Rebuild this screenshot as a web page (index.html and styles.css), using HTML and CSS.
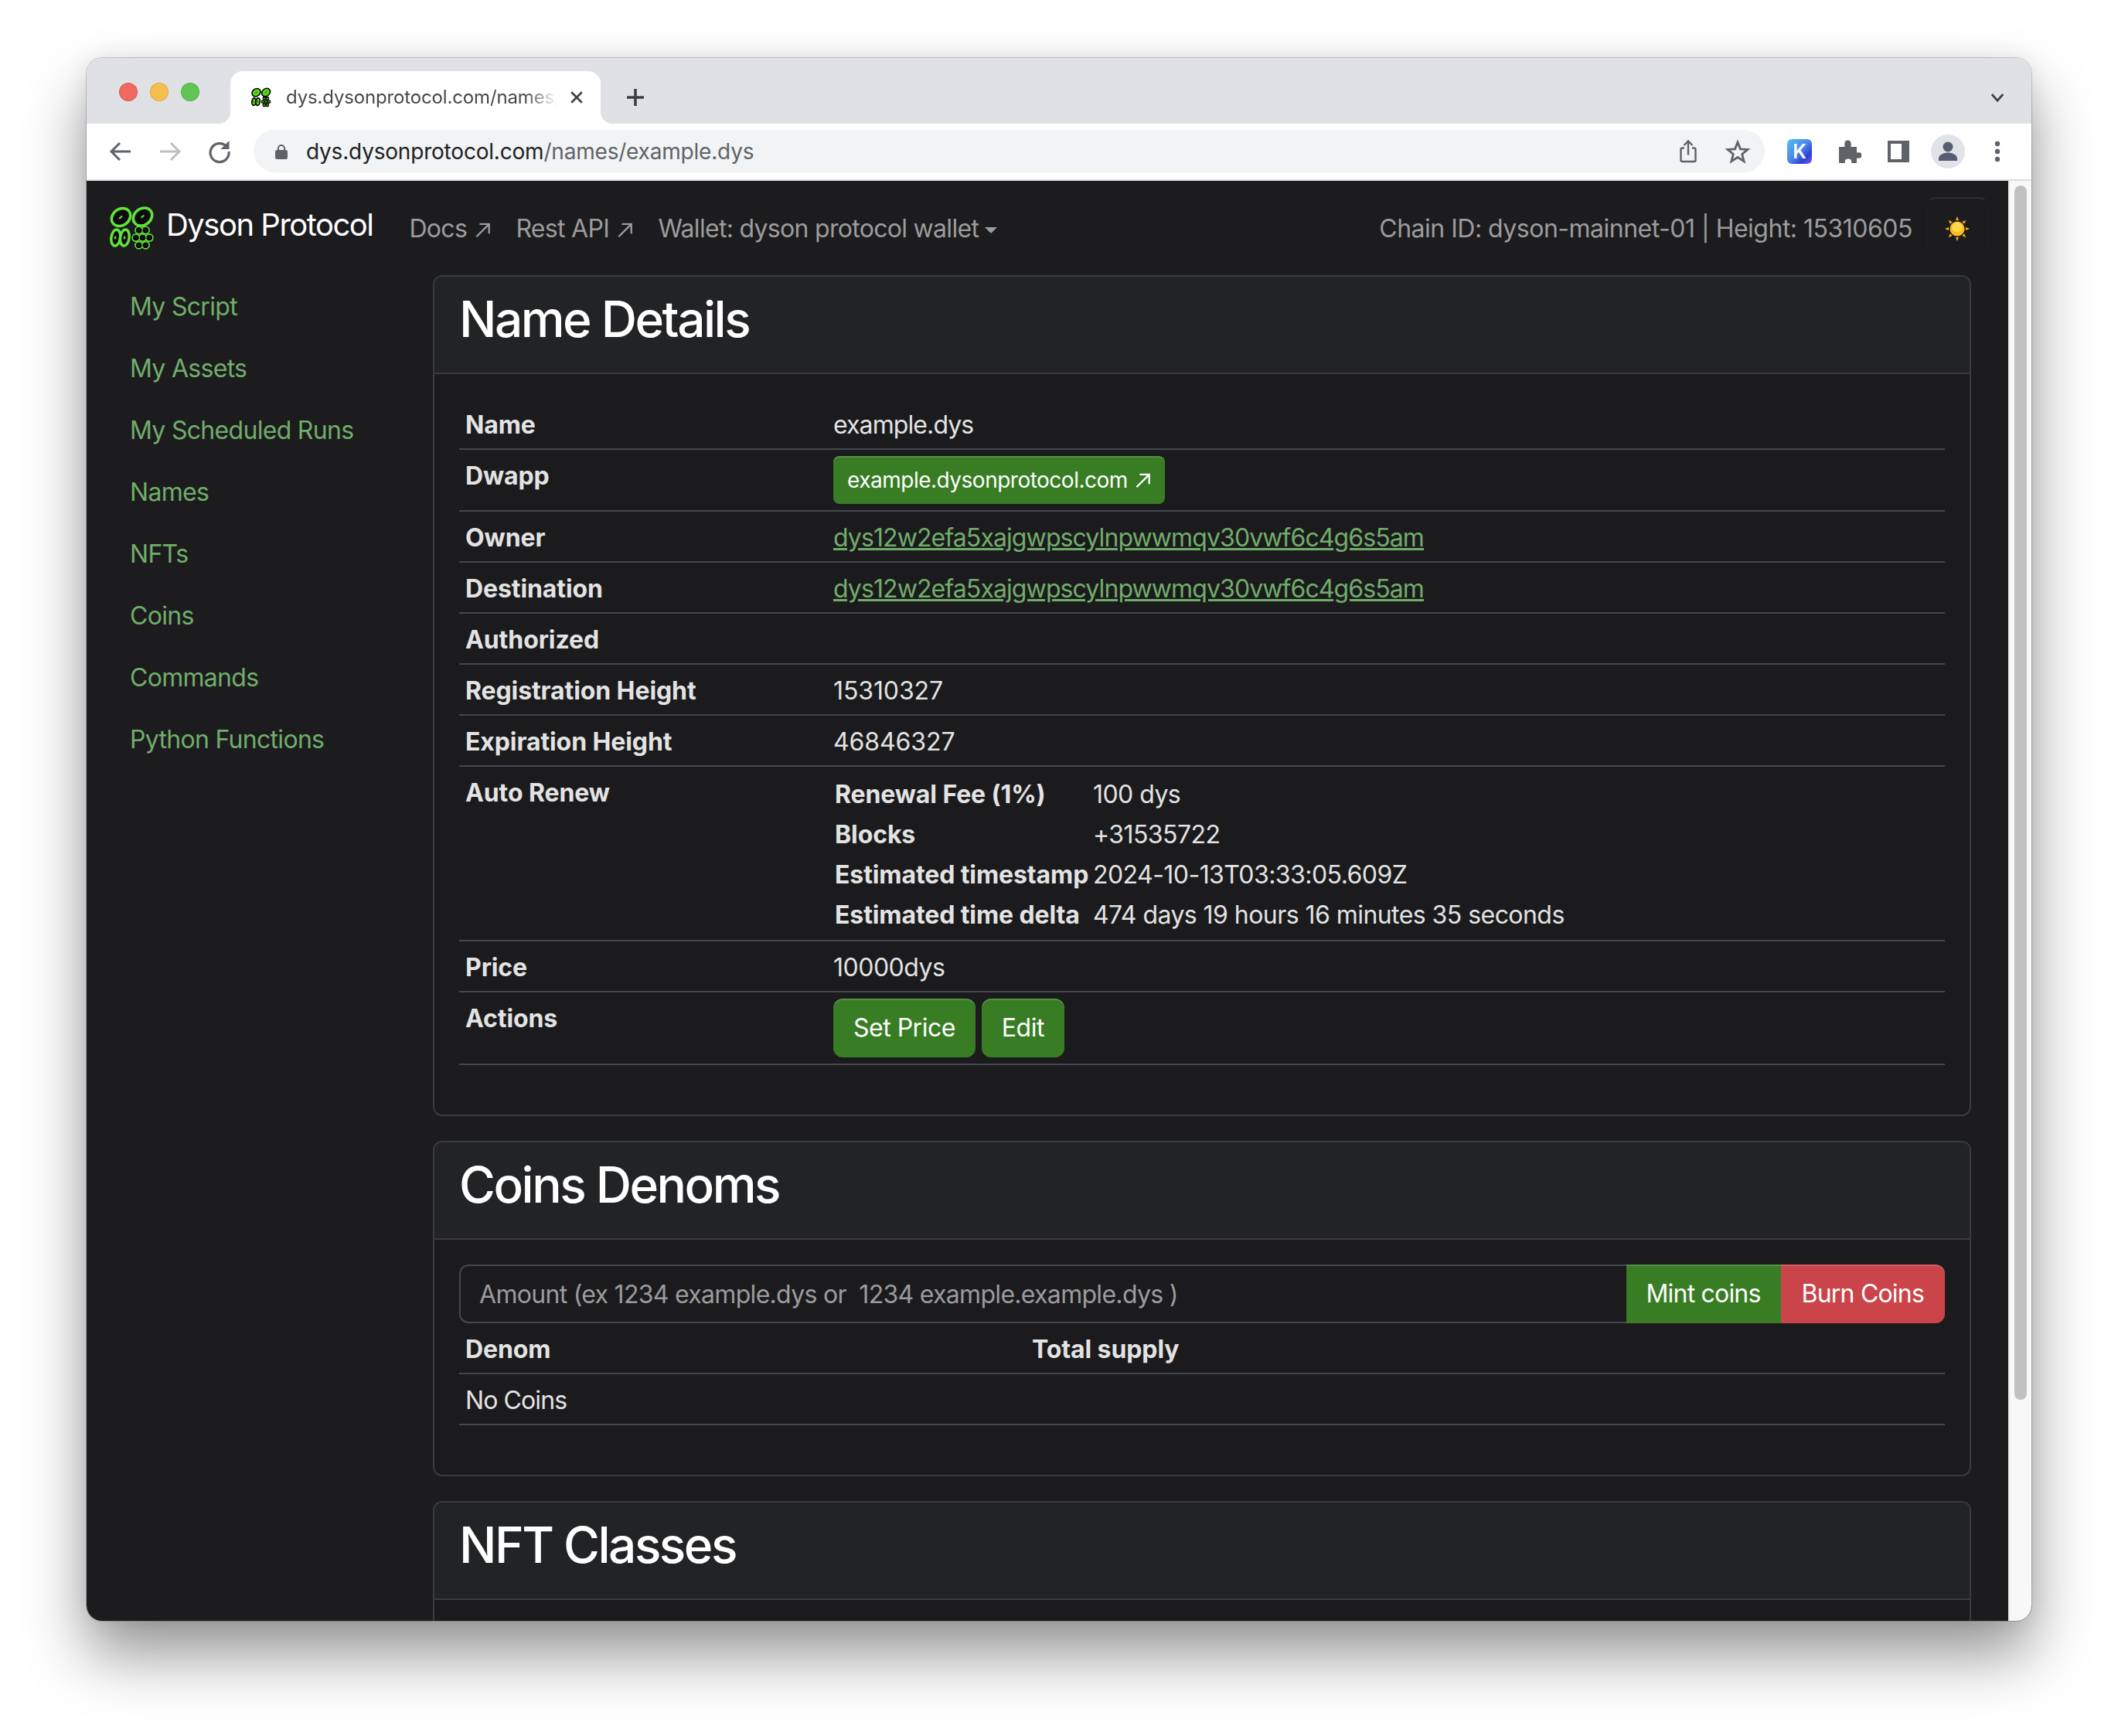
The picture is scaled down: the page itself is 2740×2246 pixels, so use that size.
FILE: index.html

```html
<!DOCTYPE html>
<html lang="en">
<head>
    <meta charset="UTF-8">
    <title>Dyson Protocol</title>
    <link rel="stylesheet" href="styles.css">
</head>
<body>
    <svg class="defs" width="0" height="0">
        <symbol id="logo" viewBox="0 0 60 58">
            <g class="logo-big">
                <ellipse cx="15" cy="14.5" rx="13.5" ry="11" transform="rotate(-38 15 14.5)"/>
                <ellipse cx="44" cy="14" rx="13.5" ry="11" transform="rotate(-38 44 14)"/>
                <ellipse cx="8" cy="42" rx="6" ry="11" transform="rotate(8 8 42)"/>
                <ellipse cx="20" cy="42" rx="6" ry="11" transform="rotate(8 20 42)"/>
            </g>
            <g class="logo-dash">
                <path d="M12.5 16.5l4-3.500"/>
                <path d="M42 15l4-3"/>
                <path d="M7.500 40l-.5 4"/>
                <path d="M20 40l-.5 4"/>
            </g>
            <g class="logo-halo">
                <circle cx="39" cy="32" r="4"/><circle cx="48" cy="32" r="4"/>
                <circle cx="35" cy="42" r="4"/><circle cx="44" cy="42" r="4"/><circle cx="53" cy="42" r="4"/>
                <circle cx="39" cy="52" r="4"/><circle cx="48" cy="52" r="4"/>
            </g>
            <g class="logo-cell">
                <circle cx="39" cy="32" r="3.200"/><circle cx="48" cy="32" r="3.200"/>
                <circle cx="35" cy="42" r="3.200"/><circle cx="44" cy="42" r="3.200"/><circle cx="53" cy="42" r="3.200"/>
                <circle cx="39" cy="52" r="3.200"/><circle cx="48" cy="52" r="3.200"/>
            </g>
        </symbol>
        <symbol id="ext" viewBox="0 0 18 18">
            <path d="M2 16.500L15 3.500M5.500 2.500H16V13" fill="none" stroke="currentColor" stroke-width="2"/>
        </symbol>
    </svg>

    <div class="window">
        <div class="tabstrip">
            <div class="lights">
                <span class="light red"></span>
                <span class="light yellow"></span>
                <span class="light green"></span>
            </div>
            <div class="tab">
                <svg class="favicon"><use href="#logo"/></svg>
                <span class="tab-title">dys.dysonprotocol.com/names/</span>
                <svg class="tab-close" viewBox="0 0 16 16"><path d="M2 2l12 12M14 2L2 14"/></svg>
            </div>
            <svg class="new-tab" viewBox="0 0 24 24"><path d="M12 1v22M1 12h22"/></svg>
            <svg class="tab-list" viewBox="0 0 20 14"><path d="M2 2l8 9 8-9"/></svg>
        </div>

        <div class="toolbar">
            <svg class="tool-icon stroke" viewBox="0 0 32 32"><path d="M29 16H5M15 5L4 16l11 11"/></svg>
            <svg class="tool-icon stroke off" viewBox="0 0 32 32"><path d="M3 16h24M17 5l11 11-11 11"/></svg>
            <svg class="tool-icon" viewBox="0 0 32 32">
                <path d="M25 9.500A12 12 0 1 0 28 16" fill="none" stroke="#5f6368" stroke-width="3.200"/>
                <path d="M28.500 2v11h-11z" fill="#5f6368"/>
            </svg>
            <div class="omnibox">
                <svg class="lock" viewBox="0 0 16 20">
                    <path d="M4 9V6a4 4 0 0 1 8 0v3" fill="none" stroke="#5f6368" stroke-width="2"/>
                    <rect x="0" y="8" width="16" height="12" rx="2.500" fill="#5f6368"/>
                </svg>
                <div class="url">dys.dysonprotocol.com<span class="url-path">/names/example.dys</span></div>
                <svg class="tool-icon" viewBox="0 0 32 32">
                    <path d="M11 11.500H8.500a2 2 0 0 0-2 2V27a2 2 0 0 0 2 2h15a2 2 0 0 0 2-2V13.500a2 2 0 0 0-2-2H21M16 20.500V3M10.500 8l5.500-5.500L21.500 8" fill="none" stroke="#5f6368" stroke-width="2.400"/>
                </svg>
                <svg class="tool-icon" viewBox="0 0 32 32">
                    <path d="M16 4l3.500 8.800 9.500.6-7.300 6 2.400 9.200-8.100-5.100-8.100 5.100 2.400-9.200-7.300-6 9.500-.6z" fill="none" stroke="#5f6368" stroke-width="2.800" stroke-linejoin="miter"/>
                </svg>
            </div>
            <div class="tool-group">
                <div class="ext-k">K</div>
                <svg class="tool-icon" viewBox="0 0 32 32">
                    <path d="M3 10h7.500C9.500 3 12 1.500 14.500 1.500S19.500 3 18.500 10H26v7.500c6-1 6.500 1.500 6.500 3.500s-.5 4.500-6.500 3.500V30a1 1 0 0 1-1 1H19c1-4-1-5.500-4-5.500S10 27 11 31H4a1 1 0 0 1-1-1z" fill="#5f6368"/>
                </svg>
                <svg class="tool-icon" viewBox="0 0 32 32">
                    <path d="M2 2h28v28H2zM6 6v20h14V6z" fill="#5f6368" fill-rule="evenodd"/>
                </svg>
                <div class="avatar">
                    <svg viewBox="0 0 44 44">
                        <circle cx="22" cy="16" r="6.500" fill="#565e70"/>
                        <path d="M10 34v-3c0-5 7-7.500 12-7.500S34 26 34 31v3z" fill="#565e70"/>
                    </svg>
                </div>
                <svg class="tool-icon" viewBox="0 0 32 32">
                    <circle cx="16" cy="6" r="3.200" fill="#5f6368"/>
                    <circle cx="16" cy="16" r="3.200" fill="#5f6368"/>
                    <circle cx="16" cy="26" r="3.200" fill="#5f6368"/>
                </svg>
            </div>
        </div>

        <div class="page">
            <div class="viewport">
                <nav class="navbar">
                    <a class="brand">
                        <svg class="brand-logo"><use href="#logo"/></svg>
                        <span class="brand-name">Dyson Protocol</span>
                    </a>
                    <div class="nav-links">
                        <a class="nav-link">Docs <svg class="ext-icon"><use href="#ext"/></svg></a>
                        <a class="nav-link">Rest API <svg class="ext-icon"><use href="#ext"/></svg></a>
                        <a class="nav-link">Wallet: dyson protocol wallet<span class="caret"></span></a>
                    </div>
                    <div class="chain">Chain ID: dyson-mainnet-01 | Height: 15310605</div>
                    <div class="theme-btn">
                        <svg viewBox="0 0 32 32">
                            <g fill="#f6b01e">
                                <path d="M16 0l2 5h-4zM16 32l-2-5h4zM0 16l5-2v4zM32 16l-5 2v-4z"/>
                                <path d="M4.700 4.700l5 2.200-2.800 2.800zM27.300 27.300l-5-2.200 2.800-2.800zM27.300 4.700l-2.200 5-2.800-2.800zM4.700 27.300l2.200-5 2.800 2.800z"/>
                            </g>
                            <circle cx="16" cy="16" r="9.500" fill="#fbbb1c"/>
                            <circle cx="16" cy="14" r="6.500" fill="#ffd84a"/>
                        </svg>
                    </div>
                </nav>

                <div class="content">
                    <ul class="sidebar">
                        <li><a>My Script</a></li>
                        <li><a>My Assets</a></li>
                        <li><a>My Scheduled Runs</a></li>
                        <li><a>Names</a></li>
                        <li><a>NFTs</a></li>
                        <li><a>Coins</a></li>
                        <li><a>Commands</a></li>
                        <li><a>Python Functions</a></li>
                    </ul>

                    <main class="main">
                        <section class="card">
                            <header class="card-header"><h2>Name Details</h2></header>
                            <div class="card-body">
                                <table class="table details">
                                    <tr><th>Name</th><td>example.dys</td></tr>
                                    <tr><th>Dwapp</th><td class="btn-cell"><a class="btn btn-sm">example.dysonprotocol.com <svg class="ext-icon"><use href="#ext"/></svg></a></td></tr>
                                    <tr><th>Owner</th><td><a class="addr">dys12w2efa5xajgwpscylnpwwmqv30vwf6c4g6s5am</a></td></tr>
                                    <tr><th>Destination</th><td><a class="addr">dys12w2efa5xajgwpscylnpwwmqv30vwf6c4g6s5am</a></td></tr>
                                    <tr><th>Authorized</th><td></td></tr>
                                    <tr><th>Registration Height</th><td class="num">15310327</td></tr>
                                    <tr><th>Expiration Height</th><td class="num">46846327</td></tr>
                                    <tr>
                                        <th>Auto Renew</th>
                                        <td>
                                            <table class="renew">
                                                <tr><th>Renewal Fee (1%)</th><td>100 dys</td></tr>
                                                <tr><th>Blocks</th><td>+31535722</td></tr>
                                                <tr><th>Estimated timestamp</th><td>2024-10-13T03:33:05.609Z</td></tr>
                                                <tr><th>Estimated time delta</th><td>474 days 19 hours 16 minutes 35 seconds</td></tr>
                                            </table>
                                        </td>
                                    </tr>
                                    <tr><th>Price</th><td class="amount">10000dys</td></tr>
                                    <tr>
                                        <th>Actions</th>
                                        <td class="btn-cell"><div class="actions"><a class="btn">Set Price</a><a class="btn">Edit</a></div></td>
                                    </tr>
                                </table>
                            </div>
                        </section>

                        <section class="card">
                            <header class="card-header"><h2>Coins Denoms</h2></header>
                            <div class="card-body">
                                <div class="input-group">
                                    <input type="text" placeholder="Amount (ex 1234 example.dys or  1234 example.example.dys )">
                                    <a class="btn btn-flat">Mint coins</a>
                                    <a class="btn btn-flat btn-danger">Burn Coins</a>
                                </div>
                                <table class="table coins">
                                    <tr><th>Denom</th><th>Total supply</th></tr>
                                    <tr><td>No Coins</td><td></td></tr>
                                </table>
                            </div>
                        </section>

                        <section class="card card-last">
                            <header class="card-header"><h2>NFT Classes</h2></header>
                            <div class="card-body"></div>
                        </section>
                    </main>
                </div>
            </div>
            <div class="scrollbar"><div class="thumb"></div></div>
        </div>
    </div>
</body>
</html>
```

FILE: styles.css

```css
* {
    box-sizing: border-box;
}
html, body {
    height: 100%;
}
body {
    margin: 0;
    padding: 75px 112px 0;
    background: #fff;
    font-family: Inter, "Liberation Sans", sans-serif;
    font-size: 32px;
    line-height: 48px;
    letter-spacing: -0.9px;
    overflow: hidden;
}
.defs {
    position: absolute;
}
.window {
    height: 2022px;
    border-radius: 20px;
    overflow: hidden;
    display: flex;
    flex-direction: column;
    box-shadow: 0 0 0 1px rgba(0,0,0,0.18), 0 44px 80px rgba(0,0,0,0.42), 0 0 30px rgba(0,0,0,0.08);
}

/* browser chrome */
.tabstrip {
    flex: none;
    height: 85px;
    background: #dfe1e5;
    display: flex;
    align-items: flex-end;
}
.lights {
    align-self: flex-start;
    display: flex;
    gap: 16px;
    margin: 32px 40px 0 42px;
}
.light {
    width: 24px;
    height: 24px;
    border-radius: 50%;
    border: 1px solid rgba(0,0,0,0.1);
}
.red { background: #ee6a5f; }
.yellow { background: #f5be4f; }
.green { background: #61c554; }
.tab {
    position: relative;
    width: 479px;
    height: 68px;
    background: #fff;
    border-radius: 16px 16px 0 0;
    display: flex;
    align-items: center;
    padding-left: 27px;
    font-size: 24px;
    letter-spacing: -0.15px;
    color: #45484c;
}
.tab::before, .tab::after {
    content: "";
    position: absolute;
    bottom: 0;
    width: 16px;
    height: 16px;
}
.tab::before {
    left: -16px;
    background: radial-gradient(circle at 0 0, transparent 16px, #fff 16.5px);
}
.tab::after {
    right: -16px;
    background: radial-gradient(circle at 100% 0, transparent 16px, #fff 16.5px);
}
.favicon {
    flex: none;
    width: 26px;
    height: 26px;
    margin-right: 19px;
    --big-fill: #58d61f;
    --big-line: #000;
    --dash: #000;
    --halo: #000;
    --cell: #58d61f;
}
.tab-title {
    width: 351px;
    white-space: nowrap;
    -webkit-mask-image: linear-gradient(to right, #000 88%, transparent);
    mask-image: linear-gradient(to right, #000 88%, transparent);
}
.tab-close {
    width: 18px;
    height: 18px;
    margin-left: 16px;
    fill: none;
    stroke: #3c4043;
    stroke-width: 2.4;
}
.new-tab {
    width: 24px;
    height: 24px;
    margin: 0 0 22px 33px;
    fill: none;
    stroke: #3c4043;
    stroke-width: 3.6;
}
.tab-list {
    width: 18px;
    height: 13px;
    margin: 0 35px 27px auto;
    fill: none;
    stroke: #3c4043;
    stroke-width: 3;
}
.toolbar {
    flex: none;
    height: 74px;
    background: #fff;
    border-bottom: 2px solid #dadce0;
    padding: 8px 0 9px 28px;
    display: flex;
    align-items: center;
    gap: 32px;
}
.tool-icon {
    flex: none;
    width: 32px;
    height: 32px;
}
.stroke path {
    fill: none;
    stroke: #5f6368;
    stroke-width: 3;
}
.off path {
    stroke: #bdc1c6;
}
.omnibox {
    flex: none;
    width: 1955px;
    height: 55px;
    margin-left: -4px;
    border-radius: 28px;
    background: #f1f3f4;
    display: flex;
    align-items: center;
    padding: 0 19px 0 28px;
    gap: 32px;
}
.lock {
    flex: none;
    width: 16px;
    height: 22px;
    margin-right: -8px;
}
.url {
    flex: 1;
    font-size: 28px;
    letter-spacing: -0.2px;
    color: #202124;
}
.url-path {
    color: #5f6368;
}
.tool-group {
    display: flex;
    align-items: center;
    gap: 32px;
    margin-left: -3px;
}
.ext-k {
    flex: none;
    width: 32px;
    height: 32px;
    border-radius: 6px;
    background: linear-gradient(135deg, #4fc3ec 0%, #4a86e8 50%, #2b3fd6 75%, #7a5cf0 100%);
    color: #fff;
    font-size: 25px;
    font-weight: 600;
    line-height: 32px;
    letter-spacing: 0;
    text-align: center;
}
.avatar {
    flex: none;
    width: 44px;
    height: 44px;
    margin: 0 -6px;
    border-radius: 50%;
    background: #e1e3e8;
}
.avatar svg {
    display: block;
}

/* page */
.page {
    flex: 1;
    min-height: 0;
    display: flex;
    background: #1c1c1e;
}
.viewport {
    flex: 1;
    min-width: 0;
}
.scrollbar {
    flex: none;
    width: 30px;
    background: #f8f8f8;
    border-left: 2px solid #ececec;
    padding: 6px 6px 0 6px;
}
.thumb {
    width: 16px;
    height: 1571px;
    border-radius: 8px;
    background: #c1c1c1;
}
.navbar {
    height: 122px;
    display: flex;
    align-items: center;
    padding: 0 26px 0 30px;
    letter-spacing: -0.5px;
}
.brand {
    display: flex;
    align-items: center;
    gap: 15px;
    color: #fff;
}
.brand-logo {
    flex: none;
    width: 58px;
    height: 56px;
    --big-fill: #0c0c0c;
    --big-line: #62e33d;
    --dash: #62e33d;
    --halo: #62e33d;
    --cell: #111;
}
.logo-big ellipse {
    fill: var(--big-fill);
    stroke: var(--big-line);
    stroke-width: 3.6;
}
.logo-dash path {
    fill: none;
    stroke: var(--dash);
    stroke-width: 2.2;
}
.logo-halo circle {
    fill: var(--halo);
    stroke: var(--halo);
    stroke-width: 3.4;
}
.logo-cell circle {
    fill: var(--cell);
    stroke: #000;
    stroke-width: 1.5;
}
.brand-name {
    font-size: 40px;
    letter-spacing: -1.5px;
    padding-bottom: 8px;
}
.nav-links {
    display: flex;
    margin-left: 47px;
    gap: 32px;
    padding-top: 1px;
    letter-spacing: -0.7px;
}
.nav-link {
    color: #9c9c9d;
    white-space: nowrap;
}
.ext-icon {
    width: 21px;
    height: 21px;
    margin-left: 2px;
    vertical-align: -1px;
}
.caret {
    display: inline-block;
    margin-left: 8px;
    vertical-align: 5px;
    border-top: 8px solid #9c9c9d;
    border-left: 8px solid transparent;
    border-right: 8px solid transparent;
}
.chain {
    margin-left: auto;
    margin-right: 18px;
    padding-top: 1px;
    color: #9c9c9d;
    white-space: nowrap;
}
.theme-btn {
    flex: none;
    width: 80px;
    height: 83px;
    margin-top: 3px;
    border: 2px solid;
    border-color: #2d2e31 #1e1e20 #1d1d1f #1e1e20;
    border-radius: 12px;
    display: flex;
    align-items: center;
    justify-content: center;
}
.theme-btn svg {
    width: 32px;
    height: 32px;
    margin-bottom: 2px;
}
.content {
    display: flex;
}
.sidebar {
    flex: none;
    width: 448px;
    margin: 0;
    padding: 0;
    list-style: none;
    letter-spacing: -0.7px;
}
.sidebar li {
    padding: 17px 0 15px 56px;
    color: #71ad6a;
}
.main {
    flex: 1;
    min-width: 0;
    padding-right: 48px;
}
.card {
    border: 2px solid #3a3b3e;
    border-radius: 12px;
    margin-bottom: 32px;
    background: #1b1b1d;
    overflow: hidden;
}
.card-last {
    height: 700px;
}
.card-header {
    height: 126px;
    background: #222325;
    border-bottom: 2px solid #3a3b3e;
    padding: 16px 32px;
}
.card-header h2 {
    margin: 0;
    font-size: 64px;
    font-weight: 500;
    line-height: 77px;
    letter-spacing: -2.5px;
    color: #fff;
}
.card-body {
    padding: 32px;
}

/* tables */
.table {
    width: 100%;
    border-collapse: collapse;
    margin-bottom: 32px;
    table-layout: fixed;
    color: #e3e3e3;
}
.table > tbody > tr > th,
.table > tbody > tr > td {
    padding: 10px 8px 6px;
    border-bottom: 2px solid #44474e;
    text-align: left;
    vertical-align: top;
}
.table > tbody > tr > td.btn-cell {
    padding: 8px;
}
.table th {
    font-weight: 700;
    letter-spacing: -0.1px;
}
.details > tbody > tr > th {
    width: 476px;
}
.coins th:first-child {
    width: 733px;
}
.num {
    letter-spacing: -0.1px;
}
.amount {
    letter-spacing: -0.5px;
}
.renew {
    border-collapse: collapse;
}
.renew th, .renew td {
    padding: 2px;
    text-align: left;
}
.renew td {
    letter-spacing: -0.55px;
}
.renew th {
    width: 334px;
    white-space: nowrap;
}
.addr {
    color: #71ad6a;
    text-decoration: underline;
}
.btn {
    display: inline-block;
    padding: 14px 26px;
    border-radius: 12px;
    background: #387d24;
    box-shadow: inset 0 2px 0 rgba(255,255,255,0.15);
    color: #fff;
    white-space: nowrap;
    letter-spacing: -0.5px;
}
.btn-sm {
    display: block;
    width: fit-content;
    padding: 7px 18px;
    border-radius: 8px;
    font-size: 28px;
    line-height: 48px;
}
.actions {
    display: flex;
    gap: 8px;
}
.btn-flat {
    flex: none;
    border-radius: 0;
    letter-spacing: -0.8px;
}
.btn-danger {
    padding: 14px 27px;
    background: #cb444a;
    border-radius: 0 12px 12px 0;
}
.input-group {
    display: flex;
    height: 76px;
}
.input-group input {
    flex: 1;
    min-width: 0;
    background: transparent;
    border: 2px solid #44474e;
    border-right: 0;
    border-radius: 12px 0 0 12px;
    padding: 1px 24px 0;
    font: inherit;
    letter-spacing: -0.7px;
    color: #e3e3e3;
}
.input-group input::placeholder {
    color: #9c9c9d;
    opacity: 1;
}
```
